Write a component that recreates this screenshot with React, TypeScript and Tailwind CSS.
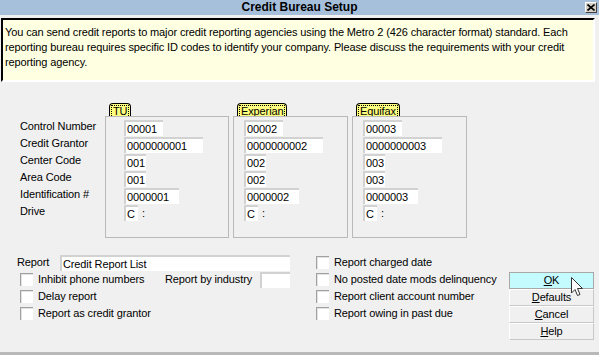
import React from 'react';

const FONT = { fontFamily: '"Liberation Sans", Arial, sans-serif' };

type Bureau = {
  name: string;
  control: string;
  grantor: string;
  center: string;
  area: string;
  ident: string;
  pad: string;
};

const bureaus: Bureau[] = [
  { name: 'TU', control: '00001', grantor: '0000000001', center: '001', area: '001', ident: '0000001', pad: 'pl-[18px] w-[124px]' },
  { name: 'Experian', control: '00002', grantor: '0000000002', center: '002', area: '002', ident: '0000002', pad: 'pl-[10px] w-[115px]' },
  { name: 'Equifax', control: '00003', grantor: '0000000003', center: '003', area: '003', ident: '0000003', pad: 'pl-[10px] w-[115px]' },
];

const labels = ['Control Number', 'Credit Grantor', 'Center Code', 'Area Code', 'Identification #', 'Drive'];

function Field({ value, w }: { value: string; w: string }) {
  return (
    <div className={`h-[16px] ${w} bg-white border-t-2 border-l-2 border-[#d2d2d2] leading-[14px] pl-[1px] text-[11px] text-black`}>
      {value}
    </div>
  );
}

function Check({ label }: { label: string }) {
  return (
    <div className="h-[17px] flex items-center gap-[5px]">
      <div className="w-[13px] h-[13px] bg-white border-t border-l border-[#a0a0a0] shadow-[inset_1px_1px_0_#e3e3e3]" />
      <span className="text-[11px]">{label}</span>
    </div>
  );
}

function Btn({ k, rest, active }: { k: string; rest: string; active?: boolean }) {
  return (
    <div
      className={`h-[17px] flex items-center justify-center text-[11px] border ${
        active ? 'bg-[#c4fbff] border-[#a8a8a8]' : 'bg-[#f0f0f0] border-t-white border-l-white border-r-[#c8c8c8] border-b-[#c8c8c8]'
      }`}>
      <span>
        <span className="underline">{k}</span>
        {rest}
      </span>
    </div>
  );
}

function Group({ b }: { b: Bureau }) {
  return (
    <div className="flex flex-col">
      <div className="h-[13px] ml-[4px] self-start bg-[#ffff80] border border-b-0 border-black rounded-t-[4px] px-[1px] pt-[1px]">
        <div className="h-[11px] border border-dotted border-black border-b-0 px-[1px] text-[11px] leading-[10px]">{b.name}</div>
      </div>
      <div className={`h-[122px] border border-[#b9b9b9] pt-[2px] flex flex-col ${b.pad}`}>
        <div className="h-[17px] pt-[1px]"><Field value={b.control} w="w-[39px]" /></div>
        <div className="h-[17px] pt-[1px]"><Field value={b.grantor} w="w-[79px]" /></div>
        <div className="h-[17px] pt-[1px]"><Field value={b.center} w="w-[22px]" /></div>
        <div className="h-[17px] pt-[1px]"><Field value={b.area} w="w-[22px]" /></div>
        <div className="h-[17px] pt-[1px]"><Field value={b.ident} w="w-[55px]" /></div>
        <div className="h-[17px] pt-[1px] flex items-start gap-[4px]">
          <Field value="C" w="w-[14px]" />
          <span className="text-[11px] leading-[16px]">:</span>
        </div>
      </div>
    </div>
  );
}

export default function App() {
  return (
    <div style={FONT} className="w-[599px] h-[355px] bg-[#f0f0f0] flex flex-col text-black relative overflow-hidden tracking-[-0.12px]">
      {/* Title bar */}
      <div className="h-[15px] bg-[#a6c0dc] flex items-center relative">
        <div className="flex-1 text-center text-[12px] font-bold leading-[15px] tracking-normal">Credit Bureau Setup</div>
        <div className="absolute right-[2px] top-[2px] w-[12px] h-[11px] bg-[#d4d0c8] border border-t-white border-l-white border-r-[#404040] border-b-[#404040] flex items-center justify-center">
          <svg width="8" height="7" viewBox="0 0 8 7">
            <path d="M0.5 0.5 L7.5 6.5 M7.5 0.5 L0.5 6.5" stroke="black" strokeWidth="1.6" />
          </svg>
        </div>
      </div>

      {/* Info box */}
      <div className="mt-[3px] ml-[1px] w-[594px] h-[64px] bg-[#ffffe1] border-t-2 border-l-2 border-t-black border-l-black border-r-2 border-b-2 border-r-white border-b-white px-[2px] pt-[5px] text-[11px] leading-[15px]">
        You can send credit reports to major credit reporting agencies using the Metro 2 (426 character format) standard. Each reporting bureau requires specific ID codes to identify your company. Please discuss the requirements with your credit reporting agency.
      </div>

      {/* Bureau groups */}
      <div className="flex mt-[21px]">
        <div className="w-[105px] pl-[20px] pt-[15px] flex flex-col">
          {labels.map(l => (
            <div key={l} className="h-[17px] leading-[17px] text-[11px] whitespace-nowrap">{l}</div>
          ))}
        </div>
        <div className="flex gap-[4px]">
          {bureaus.map(b => (
            <Group key={b.name} b={b} />
          ))}
        </div>
      </div>

      {/* Options */}
      <div className="flex mt-[16px]">
        <div className="w-[299px] pl-[17px] flex flex-col">
          <div className="h-[17px] flex items-center">
            <span className="text-[11px] w-[43px]">Report</span>
            <Field value="Credit Report List" w="w-[230px]" />
          </div>
          <div className="h-[17px] flex items-center pl-[3px]">
            <div className="w-[145px]"><Check label="Inhibit phone numbers" /></div>
            <span className="text-[11px] w-[95px]">Report by industry</span>
            <Field value="" w="w-[30px]" />
          </div>
          <div className="pl-[3px]"><Check label="Delay report" /></div>
          <div className="pl-[3px]"><Check label="Report as credit grantor" /></div>
        </div>
        <div className="w-[210px] pl-[17px] flex flex-col">
          <Check label="Report charged date" />
          <Check label="No posted date mods delinquency" />
          <Check label="Report client account number" />
          <Check label="Report owing in past due" />
        </div>
        <div className="w-[85px] mt-[18px] flex flex-col">
          <Btn k="O" rest="K" active />
          <Btn k="D" rest="efaults" />
          <Btn k="C" rest="ancel" />
          <Btn k="H" rest="elp" />
        </div>
      </div>

      <div className="mt-auto h-[3px] bg-[#b8b8b8]" />

      {/* Mouse cursor */}
      <svg className="absolute left-[571px] top-[277px]" width="13" height="20" viewBox="0 0 13 20">
        <path d="M0.5 0.5 L0.5 16 L4 12.5 L6.5 18.5 L9 17.5 L6.5 11.5 L11.5 11.5 Z" fill="white" stroke="#333" strokeWidth="1" />
      </svg>
    </div>
  );
}
